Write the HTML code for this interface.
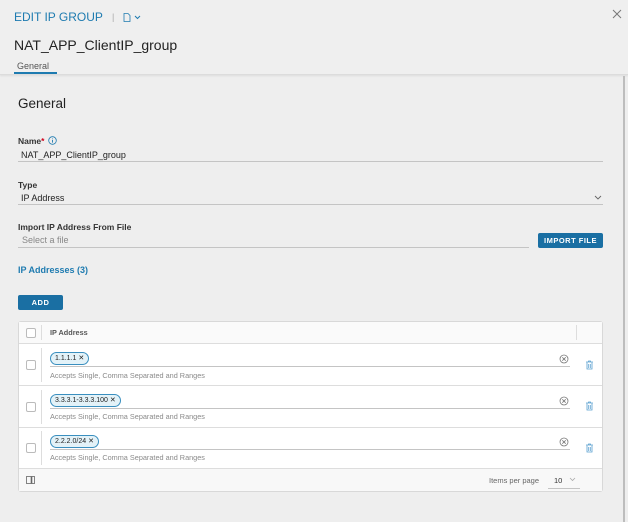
<!DOCTYPE html>
<html><head><meta charset="utf-8"><style>
*{box-sizing:border-box;margin:0;padding:0}
body{width:628px;height:522px;background:#eeeeee;font-family:"Liberation Sans",sans-serif;position:relative;overflow:hidden;color:#333}
.a{position:absolute;white-space:nowrap}
.line{position:absolute;height:1px;background:#c4c4c4}
.lbl{font-size:8.5px;font-weight:bold;color:#333}
.btn{position:absolute;background:#1a6fa3;color:#fff;font-size:7.5px;font-weight:bold;letter-spacing:.5px;border-radius:2px;text-align:center}
.cb{position:absolute;width:10px;height:10px;border:1px solid #bbb;border-radius:2px;background:#fff}
.pill{position:absolute;height:13px;border:1px solid #3a8fbf;background:#e3f2f8;border-radius:7px;font-size:7px;color:#222;padding:0 4px;line-height:11px}
.hint{position:absolute;font-size:7.3px;color:#8a8a8a}
</style></head><body>
<div class="a" style="left:0;top:0;width:628px;height:75px;background:#efefef;border-bottom:1px solid #dcdcdc;box-shadow:0 1px 2px rgba(0,0,0,.08)"></div>
<div class="a" style="left:14px;top:10px;font-size:12px;color:#1e7bb0">EDIT IP GROUP</div>
<div class="a" style="left:112px;top:12px;font-size:9px;color:#aaa">|</div>
<svg class="a" style="left:123px;top:13px" width="20" height="9"><path d="M1 .5h4l2 2v6H1z" fill="none" stroke="#1e7bb0" stroke-width=".8"/><path d="M12 3l2.5 2.5L17 3" fill="none" stroke="#1e7bb0" stroke-width="1"/></svg>
<svg class="a" style="left:612px;top:9px" width="10" height="10"><path d="M1 1l8 8M9 1l-8 8" stroke="#777" stroke-width="1"/></svg>
<div class="a" style="left:14px;top:37px;font-size:14px;color:#222">NAT_APP_ClientIP_group</div>
<div class="a" style="left:17px;top:61px;font-size:9px;color:#555">General</div>
<div class="a" style="left:14px;top:72px;width:43px;height:2px;background:#1e7bb0"></div>
<div class="a" style="left:623px;top:76px;width:2px;height:446px;background:#bdbdbd"></div>

<div class="a" style="left:18px;top:96px;font-size:13.5px;color:#222">General</div>
<div class="a lbl" style="left:18px;top:136px">Name<span style="color:#d0021b">*</span></div>
<svg class="a" style="left:48px;top:136px" width="9" height="9"><circle cx="4.5" cy="4.5" r="3.8" fill="none" stroke="#1e7bb0" stroke-width=".8"/><path d="M4.5 3.8v2.8M4.5 2.2v.6" stroke="#1e7bb0" stroke-width=".9"/></svg>
<div class="a" style="left:21px;top:150px;font-size:9px;color:#222">NAT_APP_ClientIP_group</div>
<div class="line" style="left:18px;top:161px;width:585px"></div>
<div class="a lbl" style="left:18px;top:180px">Type</div>
<div class="a" style="left:21px;top:193px;font-size:9px;color:#222">IP Address</div>
<svg class="a" style="left:594px;top:195px" width="8" height="5"><path d="M1 1l3 3 3-3" fill="none" stroke="#666" stroke-width=".9"/></svg>
<div class="line" style="left:18px;top:204px;width:585px"></div>
<div class="a lbl" style="left:18px;top:222px">Import IP Address From File</div>
<div class="a" style="left:22px;top:235px;font-size:9px;color:#888">Select a file</div>
<div class="line" style="left:18px;top:247px;width:511px"></div>
<div class="btn" style="left:538px;top:233px;width:65px;height:15px;line-height:15px">IMPORT FILE</div>
<div class="a" style="left:18px;top:265px;font-size:9px;font-weight:bold;color:#1e7bb0">IP Addresses (3)</div>
<div class="btn" style="left:18px;top:295px;width:45px;height:15px;line-height:15px">ADD</div>

<div class="a" style="left:18px;top:321px;width:585px;height:171px;background:#fff;border:1px solid #d8d8d8;border-radius:3px"></div>
<div class="a" style="left:19px;top:322px;width:583px;height:22px;background:#fafafa;border-bottom:1px solid #ddd"></div>
<div class="cb" style="left:26px;top:328px"></div>
<div class="a" style="left:41px;top:325px;width:1px;height:15px;background:#ddd"></div>
<div class="a" style="left:576px;top:325px;width:1px;height:15px;background:#ddd"></div>
<div class="a" style="left:50px;top:328px;font-size:7.3px;font-weight:bold;color:#555">IP Address</div>

<div class="a" style="left:19px;top:385px;width:583px;height:1px;background:#ddd"></div>
<div class="a" style="left:19px;top:427px;width:583px;height:1px;background:#ddd"></div>
<div class="a" style="left:19px;top:468px;width:583px;height:23px;background:#f8f8f8;border-top:1px solid #ddd"></div>

<div class="cb" style="left:26px;top:360px"></div><div class="a" style="left:41px;top:348px;width:1px;height:34px;background:#ddd"></div>
<div class="pill" style="left:50px;top:352px">1.1.1.1 ✕</div>
<div class="line" style="left:50px;top:366px;width:520px"></div>
<div class="hint" style="left:50px;top:371px">Accepts Single, Comma Separated and Ranges</div>

<div class="cb" style="left:26px;top:402px"></div><div class="a" style="left:41px;top:390px;width:1px;height:34px;background:#ddd"></div>
<div class="pill" style="left:50px;top:394px">3.3.3.1-3.3.3.100 ✕</div>
<div class="line" style="left:50px;top:408px;width:520px"></div>
<div class="hint" style="left:50px;top:412px">Accepts Single, Comma Separated and Ranges</div>

<div class="cb" style="left:26px;top:443px"></div><div class="a" style="left:41px;top:431px;width:1px;height:34px;background:#ddd"></div>
<div class="pill" style="left:50px;top:435px">2.2.2.0/24 ✕</div>
<div class="line" style="left:50px;top:449px;width:520px"></div>
<div class="hint" style="left:50px;top:453px">Accepts Single, Comma Separated and Ranges</div>

<svg class="a" style="left:559px;top:354px" width="10" height="10"><circle cx="5" cy="5" r="4" fill="none" stroke="#777" stroke-width=".8"/><path d="M3.3 3.3l3.4 3.4M6.7 3.3l-3.4 3.4" stroke="#777" stroke-width=".8"/></svg>
<svg class="a" style="left:559px;top:396px" width="10" height="10"><circle cx="5" cy="5" r="4" fill="none" stroke="#777" stroke-width=".8"/><path d="M3.3 3.3l3.4 3.4M6.7 3.3l-3.4 3.4" stroke="#777" stroke-width=".8"/></svg>
<svg class="a" style="left:559px;top:437px" width="10" height="10"><circle cx="5" cy="5" r="4" fill="none" stroke="#777" stroke-width=".8"/><path d="M3.3 3.3l3.4 3.4M6.7 3.3l-3.4 3.4" stroke="#777" stroke-width=".8"/></svg>

<svg class="a" style="left:585px;top:360px" width="9" height="10"><path d="M1 2h7M3.5 2V1h2v1M2 2.5v6.5h5V2.5M3.7 4v4M5.3 4v4" fill="none" stroke="#5aa0cf" stroke-width=".8"/></svg>
<svg class="a" style="left:585px;top:401px" width="9" height="10"><path d="M1 2h7M3.5 2V1h2v1M2 2.5v6.5h5V2.5M3.7 4v4M5.3 4v4" fill="none" stroke="#5aa0cf" stroke-width=".8"/></svg>
<svg class="a" style="left:585px;top:443px" width="9" height="10"><path d="M1 2h7M3.5 2V1h2v1M2 2.5v6.5h5V2.5M3.7 4v4M5.3 4v4" fill="none" stroke="#5aa0cf" stroke-width=".8"/></svg>

<svg class="a" style="left:26px;top:476px" width="9" height="8"><rect x=".5" y=".5" width="8" height="7" fill="none" stroke="#666" stroke-width=".8"/><path d="M5.5 .5v7" stroke="#666" stroke-width="1.6"/></svg>
<div class="a" style="left:489px;top:476px;font-size:7.5px;color:#666">Items per page</div>
<div class="a" style="left:554px;top:476px;font-size:7.5px;color:#333">10</div>
<svg class="a" style="left:569px;top:477px" width="7" height="5"><path d="M1 1l2.5 2.5L6 1" fill="none" stroke="#aaa" stroke-width=".8"/></svg>
<div class="line" style="left:548px;top:488px;width:32px"></div>
</body></html>
